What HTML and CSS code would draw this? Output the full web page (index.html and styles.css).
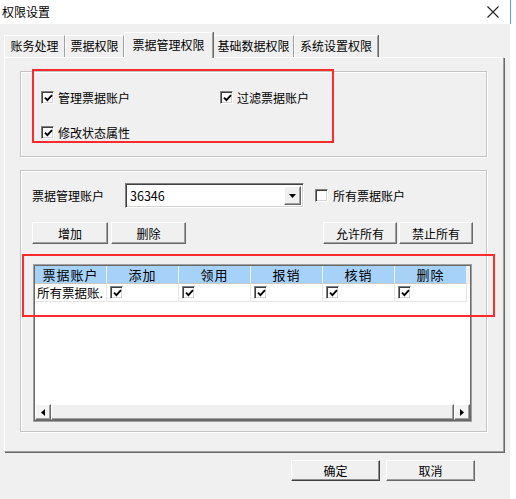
FILE: index.html
```html
<!DOCTYPE html>
<html lang="zh-CN">
<head>
<meta charset="utf-8">
<title>权限设置</title>
<link rel="stylesheet" href="styles.css">
</head>
<body>
<div class="window">
  <div class="titlebar">
    <span class="title">权限设置</span>
    <span class="close"><svg width="12" height="12" viewBox="0 0 12 12"><path d="M0.5 0.5 L11.5 11.5 M11.5 0.5 L0.5 11.5" stroke="#222" stroke-width="1.1" fill="none"/></svg></span>
  </div>
  <div class="tabstrip">
    <div class="tab t1">账务处理</div>
    <div class="tab t2">票据权限</div>
    <div class="tab t3 sel">票据管理权限</div>
    <div class="tab t4">基础数据权限</div>
    <div class="tab t5">系统设置权限</div>
  </div>
  <div class="panel">
    <div class="group g1">
      <div class="cbrow">
        <div class="cb"><span class="box"><svg class="chk" width="9" height="8" viewBox="0 0 9 8"><path d="M1 3.6 L3.4 6.2 L8 1.2" stroke="#000" stroke-width="1.9" fill="none"/></svg></span><span>管理票据账户</span></div>
        <div class="cb"><span class="box"><svg class="chk" width="9" height="8" viewBox="0 0 9 8"><path d="M1 3.6 L3.4 6.2 L8 1.2" stroke="#000" stroke-width="1.9" fill="none"/></svg></span><span>过滤票据账户</span></div>
      </div>
      <div class="cbrow">
        <div class="cb"><span class="box"><svg class="chk" width="9" height="8" viewBox="0 0 9 8"><path d="M1 3.6 L3.4 6.2 L8 1.2" stroke="#000" stroke-width="1.9" fill="none"/></svg></span><span>修改状态属性</span></div>
      </div>
    </div>
    <div class="group g2">
      <div class="acctrow">
        <span class="lbl">票据管理账户</span>
        <div class="combo">
          <span class="val">36346</span>
          <span class="dd"><svg width="7" height="4" viewBox="0 0 7 4"><path d="M0 0 H7 L3.5 4 Z" fill="#000"/></svg></span>
        </div>
        <div class="cb allcb"><span class="box"></span><span>所有票据账户</span></div>
      </div>
      <div class="btnrow">
        <div class="btns">
          <button class="btn w76">增加</button>
          <button class="btn w75">删除</button>
        </div>
        <div class="btns right">
          <button class="btn w74">允许所有</button>
          <button class="btn w74">禁止所有</button>
        </div>
      </div>
      <div class="grid">
        <div class="ghead">
          <div class="hc">票据账户</div>
          <div class="hc">添加</div>
          <div class="hc">领用</div>
          <div class="hc">报销</div>
          <div class="hc">核销</div>
          <div class="hc">删除</div>
        </div>
        <div class="grow">
          <div class="c first">所有票据账.</div>
          <div class="c"><span class="box sm"><svg class="chk" width="9" height="8" viewBox="0 0 9 8"><path d="M1 3.6 L3.4 6.2 L8 1.2" stroke="#000" stroke-width="1.9" fill="none"/></svg></span></div>
          <div class="c"><span class="box sm"><svg class="chk" width="9" height="8" viewBox="0 0 9 8"><path d="M1 3.6 L3.4 6.2 L8 1.2" stroke="#000" stroke-width="1.9" fill="none"/></svg></span></div>
          <div class="c"><span class="box sm"><svg class="chk" width="9" height="8" viewBox="0 0 9 8"><path d="M1 3.6 L3.4 6.2 L8 1.2" stroke="#000" stroke-width="1.9" fill="none"/></svg></span></div>
          <div class="c"><span class="box sm"><svg class="chk" width="9" height="8" viewBox="0 0 9 8"><path d="M1 3.6 L3.4 6.2 L8 1.2" stroke="#000" stroke-width="1.9" fill="none"/></svg></span></div>
          <div class="c"><span class="box sm"><svg class="chk" width="9" height="8" viewBox="0 0 9 8"><path d="M1 3.6 L3.4 6.2 L8 1.2" stroke="#000" stroke-width="1.9" fill="none"/></svg></span></div>
        </div>
        <div class="gbody"></div>
        <div class="hscroll">
          <span class="sbtn"><svg width="4" height="7" viewBox="0 0 4 7"><path d="M4 0 V7 L0 3.5 Z" fill="#000"/></svg></span>
          <span class="thumb"></span>
          <span class="sbtn"><svg width="4" height="7" viewBox="0 0 4 7"><path d="M0 0 V7 L4 3.5 Z" fill="#000"/></svg></span>
        </div>
      </div>
    </div>
    <div class="mark m1"></div>
    <div class="mark m2"></div>
  </div>
  <div class="footer">
    <button class="btn fbtn def">确定</button>
    <button class="btn fbtn">取消</button>
  </div>
</div>
</body>
</html>
```

FILE: styles.css
```css
* { box-sizing: border-box; }

body {
  margin: 0;
  background: #ffffff;
  font-family: "Noto Sans CJK SC", "Noto Sans", sans-serif;
  font-size: 12px;
  color: #000;
}

.window {
  width: 510px;
  height: 499px;
  background: #f0f0f0;
}

.titlebar {
  height: 24px;
  background: #fff;
  display: flex;
  align-items: center;
  justify-content: space-between;
  padding-left: 2px;
  padding-right: 11px;
  box-shadow: 1px 0 0 #5b9bd5;
}

.title { line-height: 16px; }

.close { display: flex; }

.tabstrip {
  height: 33px;
  display: flex;
  align-items: flex-end;
  padding-left: 4px;
  position: relative;
  z-index: 1;
}

.tab {
  height: 22px;
  line-height: 20px;
  text-align: center;
  white-space: nowrap;
  background: #f0f0f0;
  border-top: 1px solid #fff;
  border-left: 1px solid #fff;
  border-right: 1px solid #a0a0a0;
  box-shadow: 1px 0 0 #696969;
}

.t1 { width: 61px; }
.t2 { width: 59px; }
.t3 { width: 89px; }
.t4 { width: 81px; }
.t5 { width: 84px; }

.tab.sel {
  height: 26px;
  line-height: 23px;
  margin-bottom: -1px;
  position: relative;
  z-index: 2;
}

.panel {
  position: relative;
  margin-left: 4px;
  width: 500px;
  height: 395px;
  border-top: 1px solid #fff;
  border-left: 1px solid #fff;
  border-right: 1px solid #a0a0a0;
  border-bottom: 1px solid #a0a0a0;
  box-shadow: 1px 1px 0 #696969;
  padding-top: 13px;
  padding-left: 15px;
}

.group {
  width: 467px;
  border: 1px solid #c4c4c4;
  box-shadow: inset 1px 1px 0 #fff, 1px 1px 0 #fff;
}

.g1 {
  height: 86px;
  padding: 17px 0 0 20px;
  display: flex;
  flex-direction: column;
  gap: 18px;
}

.cbrow {
  display: grid;
  grid-template-columns: 179px auto;
  height: 17px;
  align-items: center;
}

.cb {
  display: flex;
  align-items: center;
  gap: 4px;
  line-height: 17px;
  white-space: nowrap;
}

.box {
  flex: none;
  width: 13px;
  height: 13px;
  background: #fff;
  border: 1px solid;
  border-color: #808080 #fff #fff #808080;
  box-shadow: inset 1px 1px 0 #404040, inset -1px -1px 0 #d4d4d4;
  display: flex;
  align-items: center;
  justify-content: center;
}

.chk { display: block; margin-left: 1px; }

.g2 {
  margin-top: 13px;
  height: 262px;
  padding: 12px 13px 0 11px;
}

.acctrow {
  display: flex;
  align-items: center;
  height: 25px;
}

.lbl { width: 93px; }

.combo {
  width: 179px;
  height: 25px;
  display: flex;
  background: #fff;
  border: 1px solid;
  border-color: #808080 #fff #fff #808080;
  box-shadow: inset 1px 1px 0 #404040, inset -1px -1px 0 #d4d4d4;
  padding: 2px;
}

.val {
  flex: 1;
  padding-left: 2px;
  line-height: 19px;
  font-size: 12.5px;
}

.dd {
  width: 17px;
  display: flex;
  align-items: center;
  justify-content: center;
  background: #f0f0f0;
  border: 1px solid;
  border-color: #fff #696969 #696969 #fff;
  box-shadow: inset -1px -1px 0 #a0a0a0;
}

.allcb { margin-left: 11px; gap: 5px; }

.btnrow {
  display: flex;
  justify-content: space-between;
  margin-top: 14px;
}

.btns { display: flex; gap: 3px; }
.btns.right { gap: 2px; }

.btn {
  height: 22px;
  padding: 0;
  font: inherit;
  color: #000;
  line-height: 19px;
  background: #f0f0f0;
  border: 1px solid;
  border-color: #fff #696969 #696969 #fff;
  box-shadow: inset -1px -1px 0 #a0a0a0;
}

.w76 { width: 76px; }
.w75 { width: 75px; }
.w74 { width: 74px; }

.grid {
  margin-top: 20px;
  margin-left: 1px;
  width: 439px;
  height: 158px;
  border: 1px solid #a0a0a0;
  box-shadow: inset 1px 1px 0 #696969, inset -1px -1px 0 #696969;
  padding: 1px;
  display: flex;
  flex-direction: column;
  background: #fff;
}

.ghead {
  height: 18px;
  display: flex;
  background: #f0f0f0;
  flex: none;
}

.hc {
  width: 72px;
  background: #a6d2fa;
  border-right: 1px solid #eaf4fd;
  border-bottom: 1px solid #c8c8c8;
  text-align: center;
  font-size: 13px;
  letter-spacing: 1px;
  line-height: 17px;
}

.grow {
  height: 18px;
  display: flex;
  flex: none;
}

.c {
  width: 72px;
  border-right: 1px solid #e6e6e6;
  border-bottom: 1px solid #e6e6e6;
  display: flex;
  align-items: center;
  padding-left: 3px;
}

.c.first {
  padding-left: 2px;
  font-size: 12.5px;
  letter-spacing: 0;
  white-space: nowrap;
}

.gbody { flex: 1; background: #fff; }

.hscroll {
  height: 16px;
  display: flex;
  flex: none;
}

.sbtn {
  width: 16px;
  display: flex;
  align-items: center;
  justify-content: center;
  background: #f4f4f4;
  border: 1px solid;
  border-color: #fff #696969 #696969 #fff;
  box-shadow: inset -1px -1px 0 #a0a0a0;
}

.thumb {
  flex: 1;
  background: #f0f0f0;
  border: 1px solid;
  border-color: #fff #696969 #696969 #fff;
  box-shadow: inset -1px -1px 0 #a0a0a0;
}

.mark {
  position: absolute;
  border: 2px solid #ff2b2b;
}

.m1 { left: 27px; top: 11px; width: 302px; height: 74px; }
.m2 { left: 17px; top: 196px; width: 473px; height: 63px; }

.footer {
  display: flex;
  justify-content: flex-end;
  gap: 6px;
  padding-right: 35px;
  margin-top: 8px;
}

.fbtn { width: 89px; height: 21px; }

.def {
  border-color: #fff #404040 #404040 #fff;
  box-shadow: inset -1px -1px 0 #909090;
}
```
